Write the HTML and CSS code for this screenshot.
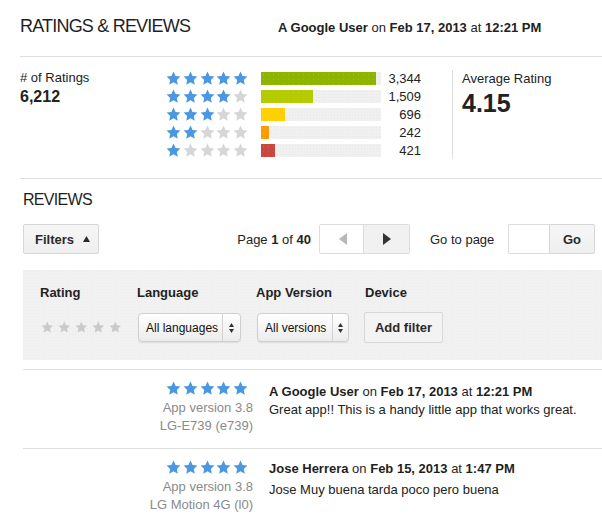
FILE: index.html
```html
<!DOCTYPE html>
<html lang="en">
<head>
<meta charset="utf-8">
<title>Ratings &amp; Reviews</title>
<link rel="stylesheet" href="styles.css">
</head>
<body>
<svg class="defs" width="0" height="0" aria-hidden="true">
  <defs>
    <symbol id="star" viewBox="0 0 20 20"><path d="M10 0.8l2.75 5.85 6.45 0.8-4.75 4.45 1.2 6.35L10 15.1l-5.650 3.15 1.2-6.35L0.8 7.45l6.45-0.8z"/></symbol>
  </defs>
</svg>

<header class="header">
  <h1 class="title">RATINGS &amp; REVIEWS</h1>
  <div class="meta"><b>A Google User</b> on <b>Feb 17, 2013</b> at <b>12:21 PM</b></div>
</header>

<section class="summary">
  <div class="total">
    <div class="total-label"># of Ratings</div>
    <div class="total-value">6,212</div>
  </div>
  <div class="hist">
    <div class="hrow">
      <span class="stars"><svg class="on"><use href="#star"/></svg><svg class="on"><use href="#star"/></svg><svg class="on"><use href="#star"/></svg><svg class="on"><use href="#star"/></svg><svg class="on"><use href="#star"/></svg></span>
      <span class="bar"><span class="fill f5" style="width:115px"></span></span>
      <span class="count">3,344</span>
    </div>
    <div class="hrow">
      <span class="stars"><svg class="on"><use href="#star"/></svg><svg class="on"><use href="#star"/></svg><svg class="on"><use href="#star"/></svg><svg class="on"><use href="#star"/></svg><svg class="off"><use href="#star"/></svg></span>
      <span class="bar"><span class="fill f4" style="width:52px"></span></span>
      <span class="count">1,509</span>
    </div>
    <div class="hrow">
      <span class="stars"><svg class="on"><use href="#star"/></svg><svg class="on"><use href="#star"/></svg><svg class="on"><use href="#star"/></svg><svg class="off"><use href="#star"/></svg><svg class="off"><use href="#star"/></svg></span>
      <span class="bar"><span class="fill f3" style="width:24px"></span></span>
      <span class="count">696</span>
    </div>
    <div class="hrow">
      <span class="stars"><svg class="on"><use href="#star"/></svg><svg class="on"><use href="#star"/></svg><svg class="off"><use href="#star"/></svg><svg class="off"><use href="#star"/></svg><svg class="off"><use href="#star"/></svg></span>
      <span class="bar"><span class="fill f2" style="width:8px"></span></span>
      <span class="count">242</span>
    </div>
    <div class="hrow">
      <span class="stars"><svg class="on"><use href="#star"/></svg><svg class="off"><use href="#star"/></svg><svg class="off"><use href="#star"/></svg><svg class="off"><use href="#star"/></svg><svg class="off"><use href="#star"/></svg></span>
      <span class="bar"><span class="fill f1" style="width:14px"></span></span>
      <span class="count">421</span>
    </div>
  </div>
  <div class="avg">
    <div class="avg-label">Average Rating</div>
    <div class="avg-value">4.15</div>
  </div>
</section>

<h2 class="subtitle">REVIEWS</h2>

<div class="toolbar">
  <button class="btn filters" type="button">Filters <svg class="up" viewBox="0 0 7 6"><path d="M3.5 0L7 6H0z"/></svg></button>
  <div class="pager">
    <span class="page-label">Page <b>1</b> of <b>40</b></span>
    <div class="nav">
      <span class="nav-prev"><svg viewBox="0 0 8 12"><path d="M8 0v12L0 6z"/></svg></span>
      <span class="nav-next"><svg viewBox="0 0 8 12"><path d="M0 0v12l8-6z"/></svg></span>
    </div>
    <span class="goto-label">Go to page</span>
    <span class="goto-input"></span>
    <button class="btn go" type="button">Go</button>
  </div>
</div>

<div class="filter-panel">
  <div class="fp-label">Rating</div>
  <div class="fp-label">Language</div>
  <div class="fp-label">App Version</div>
  <div class="fp-label">Device</div>
  <div class="fp-stars"><svg><use href="#star"/></svg><svg><use href="#star"/></svg><svg><use href="#star"/></svg><svg><use href="#star"/></svg><svg><use href="#star"/></svg></div>
  <div class="select sel-lang">
    <span class="sel-val">All languages</span>
    <span class="sel-arr"><svg viewBox="0 0 5 10"><path d="M2.5 0L5 4H0zM2.5 10L5 6H0z"/></svg></span>
  </div>
  <div class="select sel-ver">
    <span class="sel-val">All versions</span>
    <span class="sel-arr"><svg viewBox="0 0 5 10"><path d="M2.5 0L5 4H0zM2.5 10L5 6H0z"/></svg></span>
  </div>
  <button class="btn add" type="button">Add filter</button>
</div>

<div class="reviews">
  <div class="review">
    <div class="rv-side">
      <span class="stars rv-stars"><svg class="on"><use href="#star"/></svg><svg class="on"><use href="#star"/></svg><svg class="on"><use href="#star"/></svg><svg class="on"><use href="#star"/></svg><svg class="on"><use href="#star"/></svg></span>
      <div class="rv-info">App version 3.8</div>
      <div class="rv-info">LG-E739 (e739)</div>
    </div>
    <div class="rv-main">
      <div class="rv-head"><b>A Google User</b> on <b>Feb 17, 2013</b> at <b>12:21 PM</b></div>
      <div class="rv-text">Great app!! This is a handy little app that works great.</div>
    </div>
  </div>
  <div class="review">
    <div class="rv-side">
      <span class="stars rv-stars"><svg class="on"><use href="#star"/></svg><svg class="on"><use href="#star"/></svg><svg class="on"><use href="#star"/></svg><svg class="on"><use href="#star"/></svg><svg class="on"><use href="#star"/></svg></span>
      <div class="rv-info">App version 3.8</div>
      <div class="rv-info">LG Motion 4G (l0)</div>
    </div>
    <div class="rv-main rv-main-2">
      <div class="rv-head"><b>Jose Herrera</b> on <b>Feb 15, 2013</b> at <b>1:47 PM</b></div>
      <div class="rv-text">Jose Muy buena tarda poco pero buena</div>
    </div>
  </div>
</div>
</body>
</html>
```

FILE: styles.css
```css
* { box-sizing: border-box; }

html, body { background: #fff; }

body {
  margin: 0;
  width: 602px;
  font-family: "Liberation Sans", Arial, Helvetica, sans-serif;
  font-size: 13px;
  color: #222;
  overflow: hidden;
}

.defs { position: absolute; width: 0; height: 0; }

b { font-weight: bold; }

/* header */
.header {
  display: flex;
  align-items: baseline;
  height: 57px;
  margin-left: 20px;
  padding-top: 15px;
  border-bottom: 1px solid #dedede;
}
.title {
  margin: 0;
  width: 258px;
  font-size: 18px;
  font-weight: normal;
  line-height: 22px;
  letter-spacing: -0.8px;
  color: #1f1f1f;
}
.meta { font-size: 13px; color: #222; }

/* summary */
.summary {
  display: flex;
  height: 122px;
  margin-left: 20px;
  padding-top: 12px;
  border-bottom: 1px solid #dedede;
}
.total { width: 146px; padding-top: 1px; }
.total-label { font-size: 13px; line-height: 16px; }
.total-value { font-size: 16px; font-weight: bold; line-height: 18px; margin-top: 2px; }

.hist { display: flex; flex-direction: column; }
.hrow { display: flex; align-items: center; height: 18px; }

.stars { display: flex; gap: 1.75px; }
.stars svg { width: 15px; height: 15px; display: block; }
.stars .on { fill: #4a97e2; }
.stars .off { fill: #d6d6d6; }

.bar {
  margin-left: 13px;
  width: 120px;
  height: 13px;
  background-color: #f0f0f0;
  background-image: radial-gradient(circle, #e8e8e8 0.5px, transparent 0.8px);
  background-size: 3px 3px;
  display: block;
}
.fill {
  display: block;
  height: 13px;
  background-image: radial-gradient(circle, rgba(255,255,255,0.14) 0.5px, transparent 0.8px);
  background-size: 5px 5px;
}
.f5 { background-color: #8db500; }
.f4 { background-color: #b4cb00; }
.f3 { background-color: #ffd000; }
.f2 { background-color: #ff9b00; }
.f1 { background-color: #c8473e; }

.count { width: 40px; text-align: right; font-size: 13px; }

.avg {
  margin-left: 31px;
  margin-top: 1px;
  height: 89px;
  padding-left: 9px;
  padding-top: 1px;
  border-left: 1px solid #dedede;
}
.avg-label { font-size: 13px; line-height: 16px; }
.avg-value { font-size: 25px; font-weight: bold; line-height: 28px; margin-top: 2px; }

/* reviews header */
.subtitle {
  margin: 11px 0 0 23px;
  font-size: 16px;
  font-weight: normal;
  line-height: 19px;
  letter-spacing: -0.7px;
  color: #1f1f1f;
}

.toolbar {
  display: flex;
  align-items: center;
  height: 30px;
  margin-top: 15px;
  padding: 0 7px 0 23px;
}

.btn {
  font-family: inherit;
  font-size: 13px;
  font-weight: bold;
  color: #2a2a2a;
  background: linear-gradient(#f6f6f6, #efefef);
  border: 1px solid #d6d6d6;
  border-radius: 2px;
  padding: 0;
  margin: 0;
}

.filters {
  width: 76px;
  height: 30px;
  display: flex;
  align-items: center;
  padding-left: 11px;
}
.up { width: 7px; height: 6px; margin-left: 9px; fill: #2a2a2a; }

.pager { margin-left: auto; display: flex; align-items: center; height: 30px; }
.page-label { font-size: 13px; }

.nav {
  display: flex;
  margin-left: 8px;
  height: 30px;
  border: 1px solid #dcdcdc;
  border-radius: 2px;
}
.nav-prev, .nav-next { display: flex; align-items: center; justify-content: center; height: 28px; }
.nav-prev { width: 44px; background: #fff; border-right: 1px solid #dcdcdc; }
.nav-next { width: 45px; background: #f1f1f1; }
.nav svg { width: 8px; height: 12px; }
.nav-prev svg { fill: #b8b8b8; margin-left: 2px; }
.nav-next svg { fill: #333; margin-left: 1px; }

.goto-label { margin-left: 20px; width: 78px; font-size: 13px; }
.goto-input {
  width: 41px;
  height: 30px;
  background: #fff;
  border: 1px solid #dcdcdc;
  border-right: none;
  border-radius: 2px 0 0 2px;
}
.go { width: 46px; height: 30px; border-radius: 0 2px 2px 0; }

/* filter panel */
.filter-panel {
  margin: 16px 0 0 23px;
  height: 90px;
  background-color: #f1f1f1;
  background-image: radial-gradient(circle, #ececec 0.5px, transparent 0.8px);
  background-size: 3px 3px;
  display: grid;
  grid-template-columns: 97px 119px 109px auto;
  grid-template-rows: 16px 31px;
  row-gap: 11px;
  align-items: center;
  padding: 15px 0 0 17px;
}
.fp-label { font-size: 13px; font-weight: bold; line-height: 16px; color: #222; }

.fp-stars { display: flex; gap: 4.4px; margin-left: 1px; }
.fp-stars svg { width: 12.5px; height: 12.5px; fill: #cacaca; display: block; }

.select {
  display: flex;
  height: 29px;
  margin-left: 1px;
  border: 1px solid #cfcfcf;
  border-radius: 4px;
  background: linear-gradient(#ffffff, #ececec);
  box-shadow: 0 1px 1px rgba(0,0,0,0.08);
}
.sel-lang { width: 103px; }
.sel-ver { width: 92px; }
.sel-val {
  display: flex;
  align-items: center;
  padding-left: 7px;
  font-size: 12px;
  color: #111;
  border-right: 1px solid #d2d2d2;
}
.sel-lang .sel-val { width: 84px; }
.sel-ver .sel-val { width: 75px; }
.sel-arr { flex: 1; display: flex; align-items: center; justify-content: center; }
.sel-arr svg { width: 5px; height: 10px; fill: #333; }

.add {
  justify-self: start;
  margin-left: -1px;
  width: 79px;
  height: 31px;
  background: #f3f3f3;
  border-color: #d8d8d8;
}

/* review list */
.reviews { margin: 9px 0 0 23px; border-top: 1px solid #dedede; }
.review {
  display: grid;
  grid-template-columns: 230px 1fr;
  column-gap: 16px;
  height: 79px;
  border-bottom: 1px solid #dedede;
}
.rv-side { display: flex; flex-direction: column; align-items: flex-end; padding-top: 11px; }
.rv-stars { margin-bottom: 3px; margin-right: 5px; }
.rv-info { font-size: 13px; line-height: 18px; color: #8a8a8a; }
.rv-main { padding-top: 13px; }
.rv-main-2 { padding-top: 11px; }
.rv-main-2 .rv-text { margin-top: 3px; }
.rv-head { font-size: 13px; line-height: 18px; color: #1f1f1f; }
.rv-text { font-size: 13px; line-height: 18px; color: #222; }
```
